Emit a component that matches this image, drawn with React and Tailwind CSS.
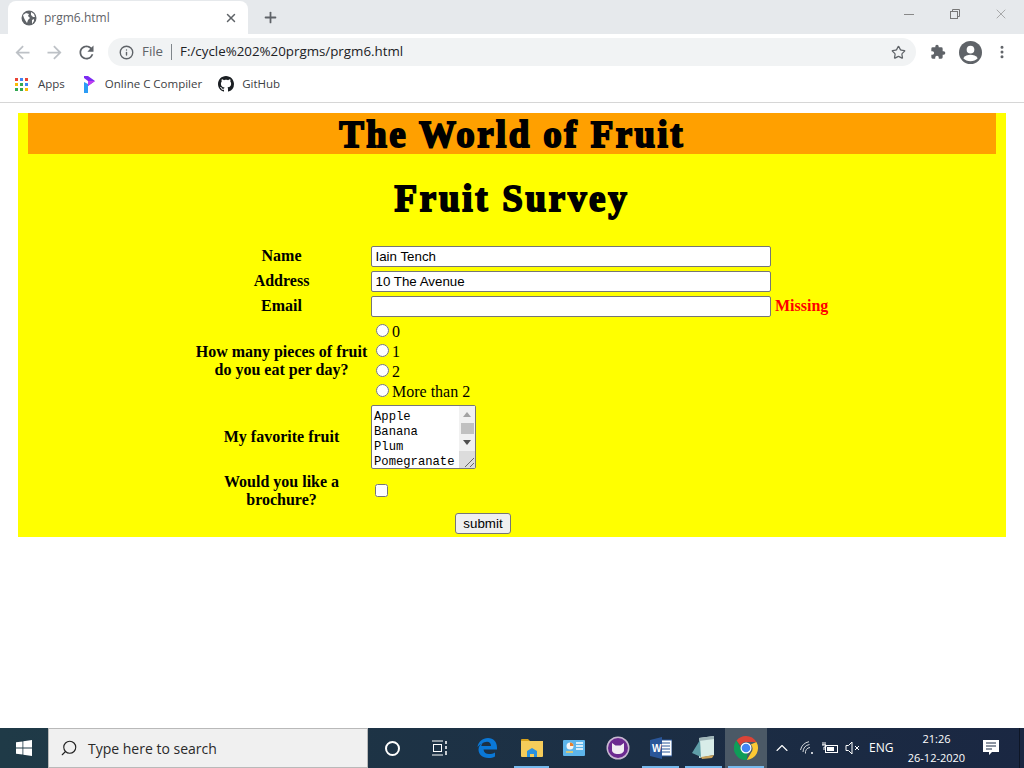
import { Info, Star, X, Plus, Search, ChevronUp, EllipsisVertical } from 'lucide-react';

const Globe = () => (
  <svg width="16" height="16" viewBox="0 0 16 16">
    <circle cx="8" cy="8" r="7.5" fill="#5f6368" />
    <path d="M2 5l3-2 3 1-1 2 2 2-2 2-1 3-2-3-1-2zM10 2l3 2 1 3-2 0-2-2zM11 10l2-1 0 2-2 3z" fill="#fff" />
  </svg>
);

const BackArrow = ({ className = '' }) => (
  <svg width="21" height="21" viewBox="0 0 24 24" fill="#bdc1c6" className={className}>
    <path d="M20 11H7.830l5.590-5.590L12 4l-8 8 8 8 1.410-1.410L7.830 13H20v-2z" />
  </svg>
);

const ReloadIcon = () => (
  <svg width="21" height="21" viewBox="0 0 24 24" fill="#5f6368">
    <path d="M17.650 6.350A7.960 7.960 0 0012 4c-4.420 0-7.990 3.580-7.990 8s3.570 8 7.990 8c3.730 0 6.840-2.550 7.730-6h-2.080A5.990 5.990 0 0112 18c-3.310 0-6-2.690-6-6s2.690-6 6-6c1.660 0 3.140.690 4.220 1.780L13 11h7V4l-2.350 2.350z" />
  </svg>
);

const AppsGrid = () => {
  const colors = ['#ea4335', '#4285f4', '#ea4335', '#fbbc05', '#34a853', '#4285f4', '#34a853', '#34a853', '#fbbc05'];
  return (
    <div className="grid grid-cols-3 gap-[2px] w-[13px]">
      {colors.map((c, i) => (
        <div key={i} className="w-[3px] h-[3px]" style={{ background: c }} />
      ))}
    </div>
  );
};

const ProgLogo = () => (
  <svg width="12" height="17" viewBox="0 0 12 17">
    <path d="M1 0h4l7 5-7 5V5L1 2z" fill="#7c2bf2" />
    <path d="M1 6l4 2v9H1z" fill="#2c9cf5" />
    <path d="M5 5l7 0-7 5z" fill="#c13df0" />
  </svg>
);

const GitHubMark = () => (
  <svg width="16" height="16" viewBox="0 0 16 16" fill="#1b1f23">
    <path d="M8 0C3.58 0 0 3.58 0 8c0 3.54 2.29 6.53 5.47 7.59.4.07.55-.17.55-.38 0-.19-.01-.82-.01-1.49-2.01.37-2.53-.49-2.69-.94-.09-.23-.48-.94-.82-1.13-.28-.15-.68-.52-.01-.53.63-.01 1.08.58 1.23.82.72 1.21 1.87.87 2.33.66.07-.52.28-.87.51-1.07-1.78-.2-3.64-.89-3.64-3.95 0-.87.31-1.59.82-2.15-.08-.2-.36-1.02.08-2.12 0 0 .67-.21 2.2.82.64-.18 1.32-.27 2-.27s1.36.09 2 .27c1.53-1.04 2.2-.82 2.2-.82.44 1.1.16 1.92.08 2.12.51.56.82 1.27.82 2.15 0 3.07-1.87 3.75-3.65 3.95.29.25.54.73.54 1.48 0 1.07-.01 1.93-.01 2.2 0 .21.15.46.55.38A8.01 8.01 0 0016 8c0-4.42-3.58-8-8-8z" />
  </svg>
);

const Puzzle = () => (
  <svg width="16" height="16" viewBox="0 0 24 24" fill="#5f6368">
    <path d="M20.5 11H19V7a2 2 0 00-2-2h-4V3.5a2.5 2.5 0 00-5 0V5H4a2 2 0 00-2 2v3.8h1.5a2.7 2.7 0 010 5.4H2V20a2 2 0 002 2h3.8v-1.5a2.7 2.7 0 015.4 0V22H17a2 2 0 002-2v-4h1.5a2.5 2.5 0 000-5z" />
  </svg>
);

const Avatar = () => (
  <svg width="23" height="23" viewBox="0 0 24 24">
    <circle cx="12" cy="12" r="12" fill="#5f6368" />
    <circle cx="12" cy="9" r="4" fill="#fff" />
    <path d="M4.5 18c1.6-2.6 4.6-3.6 7.5-3.6s5.900 1 7.500 3.600c-1.800 2-4.500 3.200-7.500 3.200s-5.700-1.200-7.500-3.200z" fill="#fff" />
  </svg>
);

const RestoreIcon = () => (
  <svg width="10" height="10" viewBox="0 0 10 10" fill="none" stroke="#777" strokeWidth="1">
    <rect x="0.500" y="2.500" width="7" height="7" />
    <path d="M2.500 2.500v-2h7v7h-2" />
  </svg>
);

const WinLogo = () => (
  <svg width="16" height="16" viewBox="0 0 16 16" fill="#fff">
    <path d="M0 2.300l6.500-.9v6.200H0zM7.300 1.300L16 0v7.600H7.300zM0 8.400h6.500v6.200L0 13.700zM7.300 8.400H16V16l-8.700-1.300z" />
  </svg>
);

const TaskView = () => (
  <svg width="17" height="16" viewBox="0 0 17 16" fill="none" stroke="#fff" strokeWidth="1">
    <path d="M1 1h11M1 15h11" />
    <rect x="2.500" y="4.500" width="8" height="7" />
    <path d="M15 1v3M15 6v3M15 11v4" strokeWidth="1.500" />
  </svg>
);

const EdgeLogo = () => (
  <svg width="20" height="20" viewBox="0 0 20 20">
    <path d="M0.500 9C1.500 3.500 5.500 0 11 0c5.500 0 9 4 9 9.500v2H6.500c.3 3 2.500 4.500 5.500 4.500 2.300 0 4.200-.6 6-1.600v4C16 19.500 14 20 11.500 20 5 20 1.500 16 1.500 11.500 1.500 8.500 3.500 6 6 4.500 5 5.600 4.500 6.800 4.300 8h9.700c0-2.500-1.400-4.300-4-4.300C6.500 3.700 3 6 .5 9z" fill="#0a78d7" />
  </svg>
);

const FolderLogo = () => (
  <svg width="22" height="20" viewBox="0 0 22 20">
    <path d="M0 2a1 1 0 011-1h6l2 2H0z" fill="#d9a21b" />
    <path d="M0 3h22v15a1 1 0 01-1 1H1a1 1 0 01-1-1z" fill="#f6cc5a" />
    <path d="M6 13l5-3 5 3v6h-3v-3H9v3H6z" fill="#2c92e0" />
  </svg>
);

const ControlLogo = () => (
  <svg width="22" height="16" viewBox="0 0 22 16">
    <rect width="22" height="16" rx="1" fill="#5db4ea" />
    <circle cx="7" cy="6" r="3.500" fill="#f4f4f4" />
    <path d="M7 6V2.500A3.500 3.500 0 0110.500 6z" fill="#e8802c" />
    <path d="M13 3h7M13 6h7M13 9h7" stroke="#fff" strokeWidth="1.500" />
    <path d="M3 12h7" stroke="#f6cc5a" strokeWidth="1.500" />
  </svg>
);

const CatLogo = () => (
  <svg width="24" height="24" viewBox="0 0 24 24">
    <circle cx="12" cy="12" r="11.500" fill="#c9b9d2" />
    <circle cx="12" cy="12" r="10" fill="#6b2a90" />
    <path d="M6 7l3.500 2.500h5L18 7v7c0 2.500-2.500 4-6 4s-6-1.500-6-4z" fill="#f1edf3" />
  </svg>
);

const WordLogo = () => (
  <svg width="22" height="22" viewBox="0 0 22 22">
    <rect x="9" y="3" width="13" height="16" fill="#fff" stroke="#2a5699" />
    <path d="M12 6h8M12 9h8M12 12h8M12 15h8" stroke="#2a5699" />
    <path d="M0 3l12-3v22L0 19z" fill="#2a5699" />
    <text x="2" y="14.500" fontSize="10" fontWeight="700" fill="#fff" fontFamily="Liberation Sans, sans-serif">W</text>
  </svg>
);

const NoteLogo = () => (
  <svg width="24" height="24" viewBox="0 0 24 24">
    <path d="M7 2l15-2v19l-15 3z" fill="#d8ece8" />
    <path d="M7 2l15-2v3L7 5z" fill="#9fb5b8" />
    <path d="M0 17L8 4l1 17z" fill="#5f9ea8" />
    <path d="M9 21l13-2-2 3-10 1z" fill="#c9a25b" />
  </svg>
);

const ChromeLogo = () => (
  <svg width="24" height="24" viewBox="0 0 24 24">
    <path d="M12 0a12 12 0 0110.400 6H12a6 6 0 00-5.600 3.800L2.500 4.600A12 12 0 0112 0z" fill="#db4437" />
    <path d="M22.400 6A12 12 0 0112.800 24l4.400-7.500A6 6 0 0016.800 8.400L22.400 6z" fill="#fcc934" />
    <path d="M12.800 24A12 12 0 012.500 4.600l4.500 7.900a6 6 0 006.500 3.400z" fill="#0f9d58" />
    <circle cx="12" cy="12" r="5.500" fill="#fff" />
    <circle cx="12" cy="12" r="4.300" fill="#4285f4" />
  </svg>
);

const WifiIcon = () => (
  <svg width="14" height="14" viewBox="0 0 14 14" fill="none" stroke="#d5d8dc" strokeWidth="1">
    <path d="M.5 9A11 11 0 019 .7M3 11A8 8 0 019.500 3.500M5.500 12.500A5 5 0 0110 6.500" />
    <circle cx="12" cy="12" r="1" fill="#fff" stroke="none" />
  </svg>
);

const BatteryIcon = () => (
  <svg width="16" height="12" viewBox="0 0 16 12" fill="none" stroke="#fff" strokeWidth="1">
    <rect x="3.500" y="3.500" width="12" height="7" />
    <rect x="5" y="5" width="7" height="4" fill="#fff" stroke="none" />
    <path d="M1 0v3M3 0v3M0 3h4v2H2v3" />
  </svg>
);

const MuteIcon = () => (
  <svg width="15" height="14" viewBox="0 0 15 14" fill="none" stroke="#fff" strokeWidth="1">
    <path d="M1 4.500h2.500L7 1v12L3.500 9.500H1zM10 5l4 4M14 5l-4 4" />
  </svg>
);

const NotifyIcon = () => (
  <svg width="16" height="16" viewBox="0 0 16 16">
    <path d="M0 0h16v12H9l-3 3v-3H0z" fill="#fff" />
    <path d="M3 3h10M3 6h10M3 9h6" stroke="#1b2a45" />
  </svg>
);

const TaskSlot = ({ w, line, active, children }) => (
  <div className={`${w} h-full shrink-0 relative flex items-center justify-center ${active ? 'bg-[#4b5966]' : ''}`}>
    {children}
    {line && <div className="absolute bottom-0 inset-x-[3px] h-[2px] bg-[#76b9ed]" />}
  </div>
);

const Label = ({ children, className = '' }) => (
  <div className={`text-center font-bold leading-[18px] self-center ${className}`}>{children}</div>
);

const TextBox = ({ value }) => (
  <input
    readOnly
    defaultValue={value}
    className="w-[400px] h-[21px] bg-white border border-[#767676] rounded-[2px] px-[3.5px] text-[13.33px] text-black leading-none [font-family:'Liberation_Sans',sans-serif]"
  />
);

const RadioLine = ({ label }) => (
  <label className="flex items-center h-[20px] pt-[2px] pl-[5px] leading-[20px]">
    <input type="radio" name="pieces" className="w-[13px] h-[13px] mr-[3px] -mt-[3px]" />
    {label}
  </label>
);

const TextareaBar = () => (
  <div className="absolute top-[1px] right-[1px] bottom-[1px] w-[16px] flex flex-col">
    <div className="h-[45px] bg-[#f1f1f1] flex flex-col items-center">
      <svg width="8" height="5" viewBox="0 0 8 5" fill="#a3a3a3" className="mt-[6px]"><path d="M4 0l4 5H0z" /></svg>
      <div className="w-[13px] h-[11px] bg-[#c1c1c1] mt-[6px]" />
      <svg width="8" height="5" viewBox="0 0 8 5" fill="#505050" className="mt-[6px]"><path d="M0 0h8L4 5z" /></svg>
    </div>
    <div className="flex-1 bg-[#dcdcdc] flex items-end justify-end">
      <svg width="12" height="12" viewBox="0 0 12 12" stroke="#666" strokeWidth="1"><path d="M2 11l9-9M7 11l4-4" /></svg>
    </div>
  </div>
);

export default function App() {
  return (
    <div className="h-screen w-[1024px] overflow-hidden flex flex-col bg-white [font-family:'Open_Sans',sans-serif]">
      {/* tab strip */}
      <div className="h-[34px] bg-[#e6e9ec] flex items-end shrink-0">
        <div className="ml-[8px] w-[240px] h-[33px] bg-white rounded-t-[8px] flex items-center pl-[13px] pr-[10px]">
          <Globe />
          <span className="ml-[7px] text-[12px] text-[#5f6368] flex-1">prgm6.html</span>
          <X size={14} color="#5f6368" strokeWidth={2.5} />
        </div>
        <div className="ml-[14px] h-[33px] flex items-center">
          <Plus size={17} color="#5f6368" strokeWidth={2.5} />
        </div>
        <div className="ml-auto h-full flex items-center pb-[6px]">
          <div className="w-[10px] h-px bg-[#888]" />
          <div className="ml-[36px]"><RestoreIcon /></div>
          <X size={16} color="#888" strokeWidth={1} className="ml-[33px] mr-[15px]" />
        </div>
      </div>

      {/* toolbar */}
      <div className="h-[34px] pt-[2px] shrink-0 flex items-center">
        <div className="w-[108px] flex items-center shrink-0">
          <BackArrow className="ml-[12px]" />
          <BackArrow className="ml-[11px] -scale-x-100" />
          <div className="ml-[11px]"><ReloadIcon /></div>
        </div>
        <div className="w-[808px] h-[28px] rounded-full bg-[#f1f3f4] flex items-center pl-[11px] pr-[10px] text-[13.33px]">
          <Info size={15} color="#5f6368" strokeWidth={2.2} />
          <span className="ml-[8px] text-[#5f6368]">File</span>
          <div className="w-px h-[16px] bg-[#80868b] ml-[8px]" />
          <span className="ml-[8px] text-[#202124]">F:/cycle%202%20prgms/prgm6.html</span>
          <Star size={15} color="#5f6368" strokeWidth={2} className="ml-auto" />
        </div>
        <div className="ml-[14px]"><Puzzle /></div>
        <div className="ml-[13px]"><Avatar /></div>
        <div className="ml-[12px]"><EllipsisVertical size={16} color="#5f6368" strokeWidth={2.5} /></div>
      </div>

      {/* bookmarks */}
      <div className="h-[35px] pb-[2px] shrink-0 border-b border-[#d6d6d6] flex items-center pl-[15px] text-[11.5px] text-[#3c4043]">
        <AppsGrid />
        <span className="ml-[10px]">Apps</span>
        <div className="ml-[18px]"><ProgLogo /></div>
        <span className="ml-[10px]">Online C Compiler</span>
        <div className="ml-[16px]"><GitHubMark /></div>
        <span className="ml-[8px]">GitHub</span>
      </div>

      {/* page */}
      <div className="flex-1 min-h-0 pt-[10px] px-[18px] text-black text-[16px] [font-family:'Liberation_Serif',serif]">
        <div className="bg-[#ffff00] h-[424px]">
          <div className="mx-[10px] h-[41px] bg-[#ffa000] text-center text-[37px] leading-[43px] font-bold tracking-[2.4px] [-webkit-text-stroke:1.8px_black]">
            The World of Fruit
          </div>
          <div className="mt-[23px] mb-[26px] h-[43px] text-center text-[37px] leading-[43px] font-bold tracking-[2.7px] [-webkit-text-stroke:1.8px_black]">
            Fruit Survey
          </div>

          <div className="w-[636px] mx-auto grid grid-cols-[175px_1fr] gap-x-[2px] gap-y-[4px]">
            <Label className="pb-[2px]">Name</Label>
            <TextBox value="Iain Tench" />
            <Label className="pb-[2px]">Address</Label>
            <TextBox value="10 The Avenue" />
            <Label className="pb-[2px]">Email</Label>
            <div className="flex items-center h-[21px]">
              <TextBox value="" />
              <span className="ml-[4px] -mt-[2px] font-bold leading-[18px] text-[#ff0000]">Missing</span>
            </div>
            <Label>How many pieces of fruit<br />do you eat per day?</Label>
            <div>
              <RadioLine label="0" />
              <RadioLine label="1" />
              <RadioLine label="2" />
              <RadioLine label="More than 2" />
            </div>
            <Label>My favorite fruit</Label>
            <div className="relative w-[105px] h-[64px]">
              <textarea
                readOnly
                defaultValue={'Apple\nBanana\nPlum\nPomegranate\nMango\nKiwi\nPear'}
                className="block w-full h-full resize-none overflow-hidden bg-white border border-[#767676] rounded-[2px] px-[2px] pt-[4px] text-[12.2px] leading-[15px] whitespace-pre [font-family:'Liberation_Mono',monospace]"
              />
              <TextareaBar />
            </div>
            <Label>Would you like a<br />brochure?</Label>
            <div className="flex items-center pl-[4px] pb-[2px]">
              <input type="checkbox" className="w-[13px] h-[13px]" />
            </div>
            <div className="col-span-2 flex pl-[261px]">
              <button className="h-[21px] w-[56px] bg-[#efefef] border border-[#767676] rounded-[3px] text-[13.33px] leading-none [font-family:'Liberation_Sans',sans-serif]">
                submit
              </button>
            </div>
          </div>
        </div>
      </div>

      {/* taskbar */}
      <div className="h-[40px] shrink-0 flex items-stretch bg-gradient-to-r from-[#1f3a47] to-[#1a2742] text-white">
        <div className="w-[48px] flex items-center justify-center shrink-0"><WinLogo /></div>
        <div className="w-[320px] shrink-0 bg-[#f0f0f0] border border-[#b9b9b9] flex items-center pl-[11px] text-[14px] text-[#2a2a2a]">
          <Search size={18} color="#222" strokeWidth={1.5} className="-scale-x-100" />
          <span className="ml-[10px]">Type here to search</span>
        </div>
        <TaskSlot w="w-[48px]"><div className="w-[15px] h-[15px] rounded-full border-2 border-white" /></TaskSlot>
        <TaskSlot w="w-[47px]"><TaskView /></TaskSlot>
        <TaskSlot w="w-[48px]"><EdgeLogo /></TaskSlot>
        <TaskSlot w="w-[41px]" line><FolderLogo /></TaskSlot>
        <TaskSlot w="w-[44px]"><ControlLogo /></TaskSlot>
        <TaskSlot w="w-[43px]"><CatLogo /></TaskSlot>
        <TaskSlot w="w-[43px]" line><WordLogo /></TaskSlot>
        <TaskSlot w="w-[43px]" line><NoteLogo /></TaskSlot>
        <TaskSlot w="w-[42px]" line active><ChromeLogo /></TaskSlot>
        <div className="flex items-center shrink-0">
          <ChevronUp size={20} color="#fff" strokeWidth={1.3} className="ml-[5px]" />
          <div className="ml-[8px]"><WifiIcon /></div>
          <div className="ml-[8px]"><BatteryIcon /></div>
          <div className="ml-[7px]"><MuteIcon /></div>
          <span className="ml-[9px] text-[12px]">ENG</span>
          <div className="ml-[13px] w-[60px] whitespace-nowrap text-center text-[11px] leading-[19px]">
            <div>21:26</div>
            <div>26-12-2020</div>
          </div>
          <div className="ml-[17px]"><NotifyIcon /></div>
          <div className="ml-[20px] w-px h-full bg-[#0e1626]" />
        </div>
      </div>
    </div>
  );
}
